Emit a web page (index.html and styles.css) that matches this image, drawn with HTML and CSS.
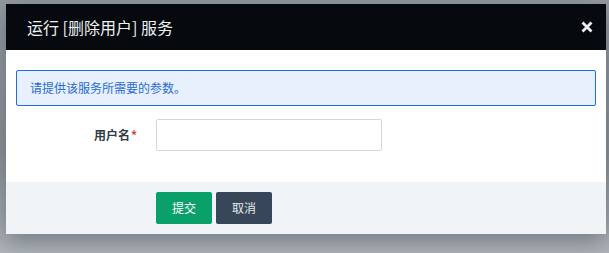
FILE: index.html
```html
<!DOCTYPE html>
<html lang="zh">
<head>
<meta charset="utf-8">
<title>运行服务</title>
<link rel="stylesheet" href="styles.css">
</head>
<body>
<div class="backdrop">
  <div class="modal">
    <div class="modal-header">
      <h1 class="modal-title">运行 [删除用户] 服务</h1>
      <button class="close" type="button" aria-label="关闭">
        <svg width="12" height="12" viewBox="0 0 12 12"><path d="M1.5 1.5 L10.5 10.5 M10.5 1.5 L1.5 10.5" stroke="#eceef0" stroke-width="2.8" stroke-linecap="butt" fill="none"/></svg>
      </button>
    </div>
    <div class="modal-body">
      <div class="alert">请提供该服务所需要的参数。</div>
      <div class="form-row">
        <label class="form-label" for="username">用户名<span class="req">*</span></label>
        <input class="form-input" id="username" type="text">
      </div>
    </div>
    <div class="modal-footer">
      <button class="btn btn-submit" type="button">提交</button>
      <button class="btn btn-cancel" type="button">取消</button>
    </div>
  </div>
</div>
</body>
</html>
```
FILE: styles.css
```css
html, body {
  margin: 0;
  padding: 0;
}
body {
  width: 609px;
  height: 253px;
  overflow: hidden;
  background: linear-gradient(180deg, #939aa1 0%, #8c939a 60%, #b1b6bb 100%);
  font-family: "Noto Sans CJK SC", "Noto Sans", sans-serif;
}
.backdrop {
  padding: 4px 3px 0 6px;
}
.modal {
  width: 600px;
  background: #ffffff;
  box-shadow: 0 8px 24px rgba(50, 60, 70, 0.45);
}
.modal-header {
  height: 46px;
  background: #060a0e;
  display: flex;
  align-items: center;
  justify-content: space-between;
  padding: 0 13px 0 21px;
}
.modal-title {
  margin: 0;
  font-size: 16px;
  font-weight: 400;
  line-height: 20px;
  color: #eef0f2;
}
.close {
  border: 0;
  background: none;
  padding: 0;
  width: 12px;
  height: 12px;
  display: flex;
}
.modal-body {
  padding: 20px 10px 31px;
}
.alert {
  box-sizing: border-box;
  height: 36px;
  border: 1px solid #1c6fe0;
  border-radius: 2px;
  background: #e7f0fc;
  color: #2a6ccc;
  font-size: 12px;
  line-height: 34px;
  padding: 0 13px;
}
.form-row {
  margin-top: 13px;
  display: grid;
  grid-template-columns: 121px 226px;
  column-gap: 19px;
  align-items: center;
}
.form-label {
  text-align: right;
  font-size: 12px;
  font-weight: 700;
  color: #343b45;
  line-height: 16px;
}
.req {
  color: #d93a3a;
  margin-left: 1px;
}
.form-input {
  box-sizing: border-box;
  width: 226px;
  height: 32px;
  border: 1px solid #cdd8e3;
  border-radius: 2px;
  background: #fff;
  margin: 0;
}
.modal-footer {
  height: 52px;
  box-sizing: border-box;
  background: #f0f4f7;
  padding: 10px 0 0 150px;
  display: flex;
  gap: 4px;
  align-items: flex-start;
}
.btn {
  width: 56px;
  height: 32px;
  border: 0;
  border-radius: 2px;
  color: #ffffff;
  font-family: "Noto Sans CJK SC", "Noto Sans", sans-serif;
  font-size: 12px;
  line-height: 32px;
  padding: 0;
}
.btn-submit {
  background: #0aa06a;
}
.btn-cancel {
  background: #374659;
  color: #e6e9ec;
}
```
